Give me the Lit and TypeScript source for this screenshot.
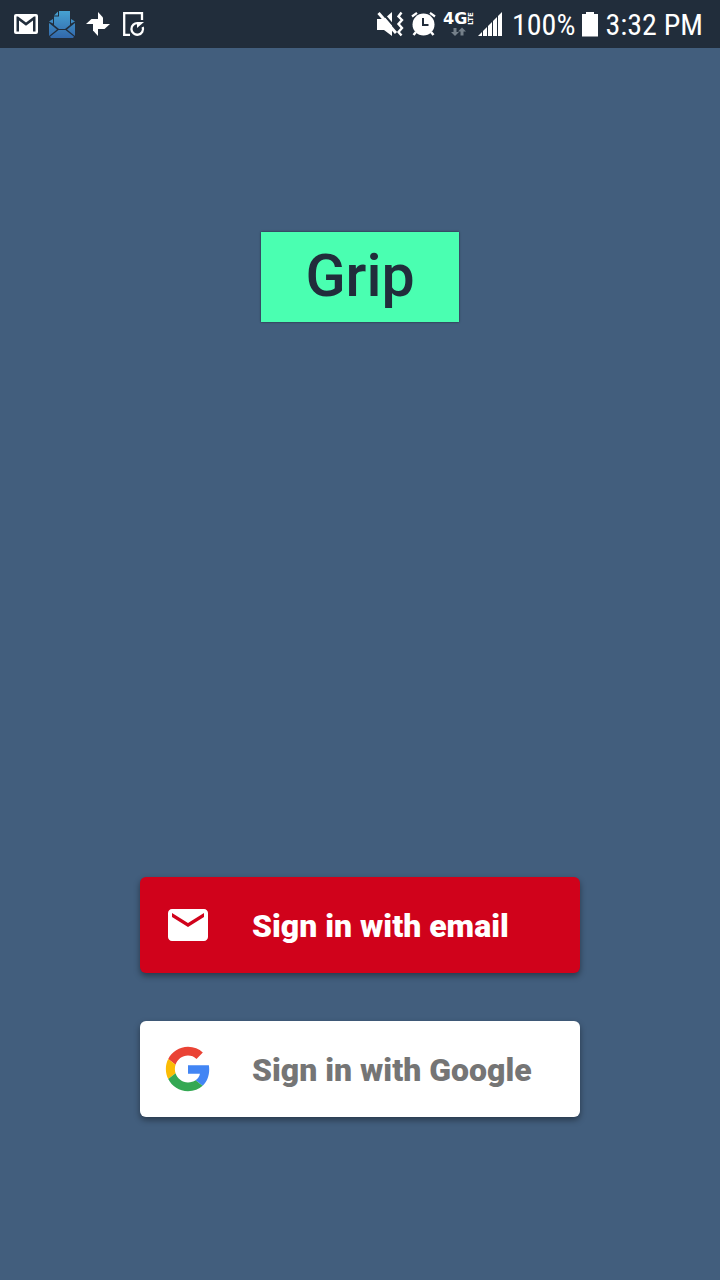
import { LitElement, html, css, svg } from "lit";
import { customElement } from "lit/decorators.js";

const mailNotice = svg`
  <svg width="24" height="20" viewBox="0 0 24 20" aria-hidden="true">
    <rect width="24" height="20" rx="2" fill="#fff"/>
    <path d="M2.500 2.500H4L12 8.500 20 2.500H21.500V17.500H19V6.500L12 11.800 5 6.500V17.500H2.500z" fill="#212d3b"/>
  </svg>`;

const envelopeNotice = svg`
  <svg width="26" height="27" viewBox="0 0 26 27" aria-hidden="true">
    <defs>
      <linearGradient id="env" x1="0" y1="0" x2="0" y2="27" gradientUnits="userSpaceOnUse">
        <stop offset="0" stop-color="#46a2d2"/>
        <stop offset="1" stop-color="#3268ab"/>
      </linearGradient>
    </defs>
    <g fill="url(#env)">
      <path d="M10 0H21V14L16 18H10L5 14V5.500H10z"/>
      <path d="M5 4.500 9 .5V4.500z"/>
      <path d="M0 12 8 18.500 0 25z"/>
      <path d="M26 12 18 18.500 26 25z"/>
      <path d="M0 10.500 4 8V12.500z"/>
      <path d="M26 10.500 22 8V12.500z"/>
      <path d="M1 25.800 9.500 19H16.500L25 25.800 24 27H2z"/>
    </g>
  </svg>`;

const pinwheelNotice = svg`
  <svg width="24" height="24" viewBox="0 0 24 24" aria-hidden="true">
    <g fill="#fff">
      <path d="M12 0 17 5.500V12H12z"/>
      <path d="M24 12 18.500 17H12V12z"/>
      <path d="M12 24 7 18.500V12H12z"/>
      <path d="M0 12 5.500 7H12V12z"/>
    </g>
  </svg>`;

const deviceNotice = svg`
  <svg width="22" height="24" viewBox="0 0 22 24" aria-hidden="true">
    <g fill="none" stroke="#fff" stroke-width="2.300">
      <path d="M19 8V1.200H1.200V22.800H7"/>
      <path d="M15 11.200A5.800 5.800 0 1 0 19.700 15"/>
    </g>
    <path d="M14 16V10H21z" fill="#fff"/>
  </svg>`;

const muteIcon = svg`
  <svg width="27" height="24" viewBox="0 0 27 24" aria-hidden="true">
    <path d="M0 7H7L15 0V24L7 18H0z" fill="#fff"/>
    <path d="M4-1 21 19" stroke="#212d3b" stroke-width="2"/>
    <path d="M1.500 1 19 21" stroke="#fff" stroke-width="3"/>
    <path d="M24.500.5 21.500 4.500 25 8 21.500 12 25 16 21.500 20 24.500 23.500" fill="none" stroke="#fff" stroke-width="2.400"/>
  </svg>`;

const alarmIcon = svg`
  <svg width="25" height="24" viewBox="0 0 25 24" aria-hidden="true">
    <circle cx="12.500" cy="12.500" r="11" fill="#fff"/>
    <path d="M1 4.500 6 .8M24 4.500 19 .8" stroke="#fff" stroke-width="2.200"/>
    <path d="M5 20 2.500 23M20 20 22.500 23" stroke="#fff" stroke-width="2.500"/>
    <path d="M12 6V13H17.500" fill="none" stroke="#212d3b" stroke-width="2"/>
  </svg>`;

const networkIcon = svg`
  <svg width="28" height="24" viewBox="0 0 28 24" role="img" aria-label="4G LTE">
    <text class="gen" x="0" y="12">4G</text>
    <text class="lte" transform="translate(30 13) rotate(-90)">LTE</text>
    <path d="M10.500 16H13.500V20H16L12 24 8 20H10.500z" fill="#75808a"/>
    <path d="M17.500 23.500H20.500V19.500H23L19 15.500 15 19.500H17.500z" fill="#75808a"/>
  </svg>`;

const signalIcon = svg`
  <svg width="27" height="24" viewBox="0 0 27 24" aria-hidden="true">
    <path d="M0 24 4 20V24zM5 24V19L9 15V24zM10 24V14L14 10V24zM15 24V9L19 5V24zM20 24V4L24 0V24z" fill="#fff"/>
  </svg>`;

const batteryIcon = svg`
  <svg width="16" height="25" viewBox="0 0 16 25" aria-hidden="true">
    <path d="M4 0H12V2H16V24.500H0V2H4z" fill="#fff"/>
  </svg>`;

const emailIcon = svg`
  <svg width="48" height="48" viewBox="0 0 24 24" aria-hidden="true">
    <path fill="#fff" d="M20 4H4c-1.100 0-1.990.9-1.990 2L2 18c0 1.100.9 2 2 2h16c1.100 0 2-.9 2-2V6c0-1.100-.9-2-2-2zm0 4l-8 5-8-5V6l8 5 8-5v2z"/>
  </svg>`;

const googleIcon = svg`
  <svg width="48" height="48" viewBox="-2 -2 52 52" aria-hidden="true">
    <path fill="#EA4335" d="M24 9.500c3.540 0 6.710 1.220 9.210 3.600l6.850-6.850C35.900 2.380 30.470 0 24 0 14.620 0 6.510 5.380 2.560 13.220l7.980 6.190C12.430 13.720 17.740 9.500 24 9.500z"/>
    <path fill="#4285F4" d="M46.980 24.550c0-1.570-.15-3.090-.38-4.550H24v9.020h12.940c-.58 2.960-2.260 5.480-4.780 7.180l7.730 6c4.510-4.180 7.090-10.360 7.090-17.650z"/>
    <path fill="#FBBC05" d="M10.530 28.590c-.48-1.450-.76-2.990-.76-4.590s.27-3.140.76-4.590l-7.980-6.190C.92 16.460 0 20.120 0 24c0 3.880.92 7.540 2.560 10.780l7.970-6.190z"/>
    <path fill="#34A853" d="M24 48c6.480 0 11.930-2.130 15.890-5.810l-7.730-6c-2.150 1.450-4.920 2.300-8.160 2.300-6.260 0-11.570-4.220-13.470-9.910l-7.980 6.190C6.510 42.620 14.620 48 24 48z"/>
  </svg>`;

@customElement("status-bar")
export class StatusBar extends LitElement {
  static styles = css`
    :host {
      display: flex;
      align-items: center;
      justify-content: space-between;
      height: 48px;
      padding: 0 17px 0 8px;
      box-sizing: border-box;
      background: #212d3b;
      color: #fff;
      font-family: "Roboto Condensed", Roboto, sans-serif;
      font-size: 30px;
      line-height: 46px;
      white-space: nowrap;
    }
    svg {
      display: block;
      flex: none;
      overflow: visible;
    }
    span {
      padding-top: 2px;
    }
    .notices {
      display: grid;
      grid-template-columns: repeat(4, 36px);
      align-items: center;
      justify-items: center;
    }
    .system {
      display: flex;
      align-items: center;
      gap: 7px;
    }
    .gen {
      font: bold 16px "DejaVu Sans", sans-serif;
      fill: #fff;
    }
    .lte {
      font: bold 7px "DejaVu Sans", sans-serif;
      fill: #fff;
    }
  `;

  render() {
    return html`
      <div class="notices">
        ${mailNotice}${envelopeNotice}${pinwheelNotice}${deviceNotice}
      </div>
      <div class="system">
        ${muteIcon}${alarmIcon}${networkIcon}${signalIcon}
        <span>100%</span>
        ${batteryIcon}
        <span>3:32 PM</span>
      </div>
    `;
  }
}

@customElement("app-root")
export class AppRoot extends LitElement {
  static styles = css`
    :host {
      display: flex;
      flex-direction: column;
      min-height: 100vh;
      background: #425e7d;
      font-family: Roboto, sans-serif;
    }
    main {
      flex: 1;
      display: flex;
      flex-direction: column;
      align-items: center;
      justify-content: space-between;
      padding: 184px 24px 163px;
    }
    .logo {
      margin: 0;
      padding: 0 44px 2px;
      background: #4affb1;
      box-shadow: 0 0 2px rgba(0, 0, 0, 0.6);
      color: #212d3b;
      font-size: 59px;
      font-weight: 500;
      line-height: 88px;
    }
    .actions {
      display: flex;
      flex-direction: column;
      gap: 48px;
      width: 100%;
      max-width: 440px;
    }
    .provider {
      display: flex;
      align-items: center;
      gap: 40px;
      width: 100%;
      height: 96px;
      padding: 0 24px;
      border: 0;
      border-radius: 6px;
      box-shadow: 0 3px 6px rgba(0, 0, 0, 0.4);
      font: 900 32px/48px Roboto, sans-serif;
      text-align: left;
      cursor: pointer;
    }
    .provider svg {
      flex: none;
    }
    .provider span {
      padding-top: 2px;
    }
    .email {
      background: #d0021b;
      color: #fff;
    }
    .google {
      background: #fff;
      color: #757575;
    }
  `;

  render() {
    return html`
      <status-bar></status-bar>
      <main>
        <h1 class="logo">Grip</h1>
        <div class="actions">
          <button class="provider email" type="button">
            ${emailIcon}<span>Sign in with email</span>
          </button>
          <button class="provider google" type="button">
            ${googleIcon}<span>Sign in with Google</span>
          </button>
        </div>
      </main>
    `;
  }
}
